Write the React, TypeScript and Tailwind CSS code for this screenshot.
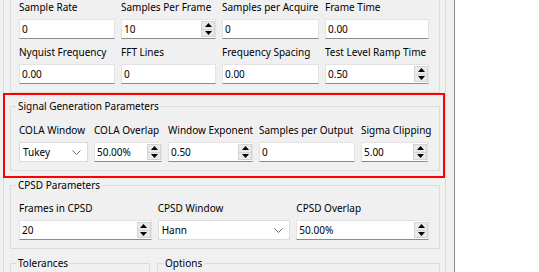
import React from "react";

const Label = ({ children }: { children: React.ReactNode }) => (
  <div className="h-[16px] leading-[16px] whitespace-nowrap">{children}</div>
);

const Arrow = ({ up }: { up?: boolean }) => (
  <svg width="7" height="4" viewBox="0 0 7 4" className="block">
    {up ? <polygon points="0,4 7,4 3.5,0" fill="#000" /> : <polygon points="0,0 7,0 3.5,4" fill="#000" />}
  </svg>
);

const LineEdit = ({ value }: { value: string }) => (
  <div className="h-[20px] bg-white border border-[#e3e3e3] border-b-[#8c8c8c] flex items-center pl-[2px] leading-none">
    {value}
  </div>
);

const SpinBox = ({ value }: { value: string }) => (
  <div className="h-[20px] bg-white border border-[#e3e3e3] border-b-[#8c8c8c] flex items-center pl-[2px] leading-none">
    <span>{value}</span>
    <div className="ml-auto w-[14px] h-[16px] border border-[#d4d4d4] bg-[#e9e9e9] flex flex-col">
      <div className="flex-1 flex items-center justify-center border-b border-[#d4d4d4]">
        <Arrow up />
      </div>
      <div className="flex-1 flex items-center justify-center">
        <Arrow />
      </div>
    </div>
  </div>
);

const Combo = ({ value }: { value: string }) => (
  <div className="h-[20px] bg-white border border-[#dcdcdc] flex items-center pl-[3px] pr-[6px] leading-none">
    <span>{value}</span>
    <svg width="9" height="5" viewBox="0 0 9 5" className="ml-auto block">
      <polyline points="0.5,0.5 4.5,4.5 8.5,0.5" fill="none" stroke="#6b6b6b" strokeWidth="1" />
    </svg>
  </div>
);

const Field = ({ label, children }: { label: string; children: React.ReactNode }) => (
  <div className="flex flex-col gap-[4px]">
    <Label>{label}</Label>
    {children}
  </div>
);

const GroupTitle = ({ children }: { children: React.ReactNode }) => (
  <span className="absolute left-[5px] top-[-9px] px-[2px] bg-[#f0f0f0] leading-[16px] whitespace-nowrap">
    {children}
  </span>
);

export default function App() {
  return (
    <div className="w-[539px] h-[272px] bg-[#f0f0f0] flex overflow-hidden text-[10px] text-black font-['Noto_Sans',sans-serif]">
      <div className="relative w-[454px] h-full">
        <div className="ml-[3px] w-[443px] h-full border-x border-[#dcdcdc] pl-[6px] pr-[5px] flex flex-col">
          <div className="relative border border-[#dcdcdc] -mt-[20px] pt-[18px] pb-[8px] pl-[8px]">
            <div className="grid grid-cols-[96px_95px_97px_104px] gap-x-[6px] gap-y-[5px]">
              <Field label="Sample Rate"><LineEdit value="0" /></Field>
              <Field label="Samples Per Frame"><SpinBox value="10" /></Field>
              <Field label="Samples per Acquire"><LineEdit value="0" /></Field>
              <Field label="Frame Time"><LineEdit value="0.00" /></Field>
              <Field label="Nyquist Frequency"><LineEdit value="0.00" /></Field>
              <Field label="FFT Lines"><LineEdit value="0" /></Field>
              <Field label="Frequency Spacing"><LineEdit value="0.00" /></Field>
              <Field label="Test Level Ramp Time"><SpinBox value="0.50" /></Field>
            </div>
          </div>

          <div className="relative mt-[13px] border border-[#dcdcdc] pt-[15px] pb-[8px] pl-[8px]">
            <GroupTitle>Signal Generation Parameters</GroupTitle>
            <div className="grid grid-cols-[69px_68px_85px_96px_67px] gap-x-[6px]">
              <Field label="COLA Window"><Combo value="Tukey" /></Field>
              <Field label="COLA Overlap"><SpinBox value="50.00%" /></Field>
              <Field label="Window Exponent"><SpinBox value="0.50" /></Field>
              <Field label="Samples per Output"><LineEdit value="0" /></Field>
              <Field label="Sigma Clipping"><SpinBox value="5.00" /></Field>
            </div>
          </div>

          <div className="relative mt-[14px] border border-[#dcdcdc] pt-[14px] pb-[8px] pl-[8px] pr-[10px]">
            <GroupTitle>CPSD Parameters</GroupTitle>
            <div className="grid grid-cols-3 gap-x-[6px]">
              <Field label="Frames in CPSD"><SpinBox value="20" /></Field>
              <Field label="CPSD Window"><Combo value="Hann" /></Field>
              <Field label="CPSD Overlap"><SpinBox value="50.00%" /></Field>
            </div>
          </div>

          <div className="mt-[14px] flex gap-[7px]">
            <div className="relative w-[140px] h-[60px] border border-[#dcdcdc]">
              <GroupTitle>Tolerances</GroupTitle>
            </div>
            <div className="relative flex-1 h-[60px] border border-[#dcdcdc]">
              <GroupTitle>Options</GroupTitle>
            </div>
          </div>
        </div>

        <div className="absolute left-[3px] top-[93px] w-[442px] h-[85px] border-2 border-[#ff0000] pointer-events-none" />
      </div>
      <div className="w-[85px] h-full bg-white border-l border-[#828790]" />
    </div>
  );
}
